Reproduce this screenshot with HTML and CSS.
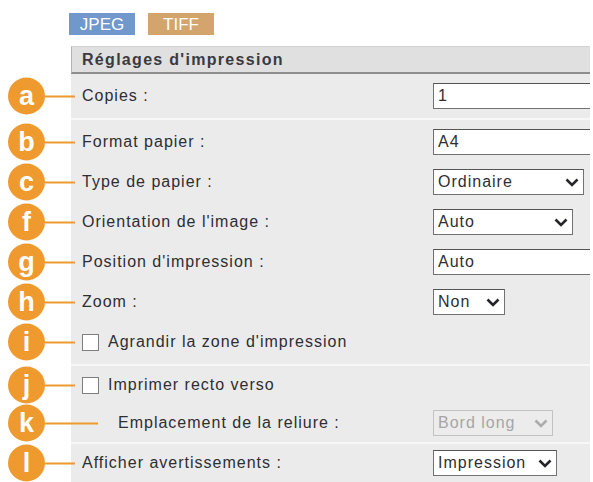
FILE: index.html
```html
<!DOCTYPE html>
<html lang="fr">
<head>
    <meta charset="UTF-8">
    <meta name="viewport" content="width=device-width, initial-scale=1.0">
    <title>Réglages d'impression</title>
    <link rel="stylesheet" href="styles.css">
</head>
<body>
<div class="tabs">
    <span class="tab tab-jpeg">JPEG</span>
    <span class="tab tab-tiff">TIFF</span>
</div>
<div class="panel">
    <div class="panel-head">Réglages d'impression</div>

    <div class="group">
        <div class="row">
            <div class="callout"><span class="badge">a</span><span class="lead"></span></div>
            <span class="label">Copies :</span>
            <div class="field">1</div>
        </div>
    </div>

    <div class="group">
        <div class="row">
            <div class="callout"><span class="badge">b</span><span class="lead"></span></div>
            <span class="label">Format papier :</span>
            <div class="field">A4</div>
        </div>
        <div class="row">
            <div class="callout"><span class="badge">c</span><span class="lead"></span></div>
            <span class="label">Type de papier :</span>
            <div class="select sel-paper"><span>Ordinaire</span>
                <svg class="chevron" viewBox="0 0 14 9"><polyline points="1.5,1.5 7,7 12.5,1.5"/></svg>
            </div>
        </div>
        <div class="row">
            <div class="callout"><span class="badge">f</span><span class="lead"></span></div>
            <span class="label">Orientation de l'image :</span>
            <div class="select sel-orient"><span>Auto</span>
                <svg class="chevron" viewBox="0 0 14 9"><polyline points="1.5,1.5 7,7 12.5,1.5"/></svg>
            </div>
        </div>
        <div class="row">
            <div class="callout"><span class="badge">g</span><span class="lead"></span></div>
            <span class="label">Position d'impression :</span>
            <div class="field">Auto</div>
        </div>
        <div class="row">
            <div class="callout"><span class="badge">h</span><span class="lead"></span></div>
            <span class="label">Zoom :</span>
            <div class="select sel-zoom"><span>Non</span>
                <svg class="chevron" viewBox="0 0 14 9"><polyline points="1.5,1.5 7,7 12.5,1.5"/></svg>
            </div>
        </div>
        <div class="row">
            <div class="callout"><span class="badge">i</span><span class="lead"></span></div>
            <label class="check"><span class="box"></span>Agrandir la zone d'impression</label>
        </div>
    </div>

    <div class="group compact">
        <div class="row">
            <div class="callout"><span class="badge">j</span><span class="lead"></span></div>
            <label class="check"><span class="box"></span>Imprimer recto verso</label>
        </div>
        <div class="row">
            <div class="callout callout-long"><span class="badge">k</span><span class="lead"></span></div>
            <span class="label indent">Emplacement de la reliure :</span>
            <div class="select sel-binding disabled"><span>Bord long</span>
                <svg class="chevron" viewBox="0 0 14 9"><polyline points="1.5,1.5 7,7 12.5,1.5"/></svg>
            </div>
        </div>
    </div>

    <div class="group compact">
        <div class="row">
            <div class="callout"><span class="badge">l</span><span class="lead"></span></div>
            <span class="label">Afficher avertissements :</span>
            <div class="select sel-warn"><span>Impression</span>
                <svg class="chevron" viewBox="0 0 14 9"><polyline points="1.5,1.5 7,7 12.5,1.5"/></svg>
            </div>
        </div>
    </div>
</div>
</body>
</html>
```

FILE: styles.css
```css
body {
    margin: 0;
    width: 593px;
    height: 482px;
    overflow: hidden;
    background: #FFFFFF;
    font-family: 'Liberation Sans', Arial, sans-serif;
    color: #2e2e33;
}

.tabs {
    display: flex;
    gap: 13px;
    padding: 13px 0 0 69px;
    margin-bottom: 11px;
}

.tab {
    width: 66px;
    height: 22px;
    line-height: 23px;
    text-align: center;
    font-size: 17px;
    color: #FFFFFF;
}

.tab-jpeg {
    background: #7098cd;
}

.tab-tiff {
    background: #d3a56c;
}

.panel {
    margin-left: 71px;
    width: 519px;
}

.panel-head {
    box-sizing: border-box;
    height: 28px;
    line-height: 26px;
    padding-left: 10px;
    background: #e0e0e0;
    border-top: 1px solid #d2d2d2;
    border-left: 1px solid #b4b4b4;
    border-bottom: 2px solid #8e8e8e;
    font-weight: bold;
    font-size: 16px;
    letter-spacing: 1.3px;
    color: #3a3a40;
}

.group {
    padding: 2px 0;
    background: #ebebeb;
    border-top: 2px solid #f7f7f7;
}

.panel-head + .group {
    border-top: none;
}

.group.compact {
    padding: 0;
}

.group.compact .row {
    height: 38px;
}

.row {
    position: relative;
    display: grid;
    grid-template-columns: 351px 1fr;
    align-items: center;
    height: 40px;
    padding-left: 11px;
    font-size: 16px;
    letter-spacing: 1px;
}

.callout {
    position: absolute;
    left: -63px;
    top: 50%;
    transform: translateY(-50%);
    display: flex;
    align-items: center;
}

.badge {
    width: 37px;
    height: 37px;
    border-radius: 50%;
    background: #ee9a2e;
    color: #FFFFFF;
    font-weight: bold;
    font-size: 27px;
    letter-spacing: 0;
    line-height: 37px;
    text-align: center;
}

.lead {
    width: 30px;
    height: 2px;
    background: #ee9a2e;
}

.callout-long .lead {
    width: 53px;
}

.label.indent {
    padding-left: 36px;
}

.field,
.select {
    box-sizing: border-box;
    height: 26px;
    background: #FFFFFF;
    border: 1px solid #727272;
    border-top-color: #555555;
    padding: 0 4px;
    line-height: 24px;
    font-size: 16px;
}

.field {
    width: 157px;
    border-right: none;
}

.select {
    display: flex;
    justify-content: space-between;
    align-items: center;
}

.chevron {
    width: 14px;
    height: 9px;
    fill: none;
    stroke: #26262a;
    stroke-width: 2.6;
}

.sel-paper {
    width: 151px;
}

.sel-orient {
    width: 140px;
}

.sel-zoom {
    width: 72px;
}

.sel-binding {
    width: 120px;
}

.sel-warn {
    width: 124px;
}

.select.disabled {
    background: #ececec;
    border-color: #c2c2c2;
    color: #a6a6a6;
}

.select.disabled .chevron {
    stroke: #acacac;
}

.check {
    display: flex;
    align-items: center;
    gap: 9px;
    grid-column: 1 / 3;
}

.box {
    box-sizing: border-box;
    width: 17px;
    height: 17px;
    background: #FFFFFF;
    border: 1px solid #7e7e7e;
}
```
